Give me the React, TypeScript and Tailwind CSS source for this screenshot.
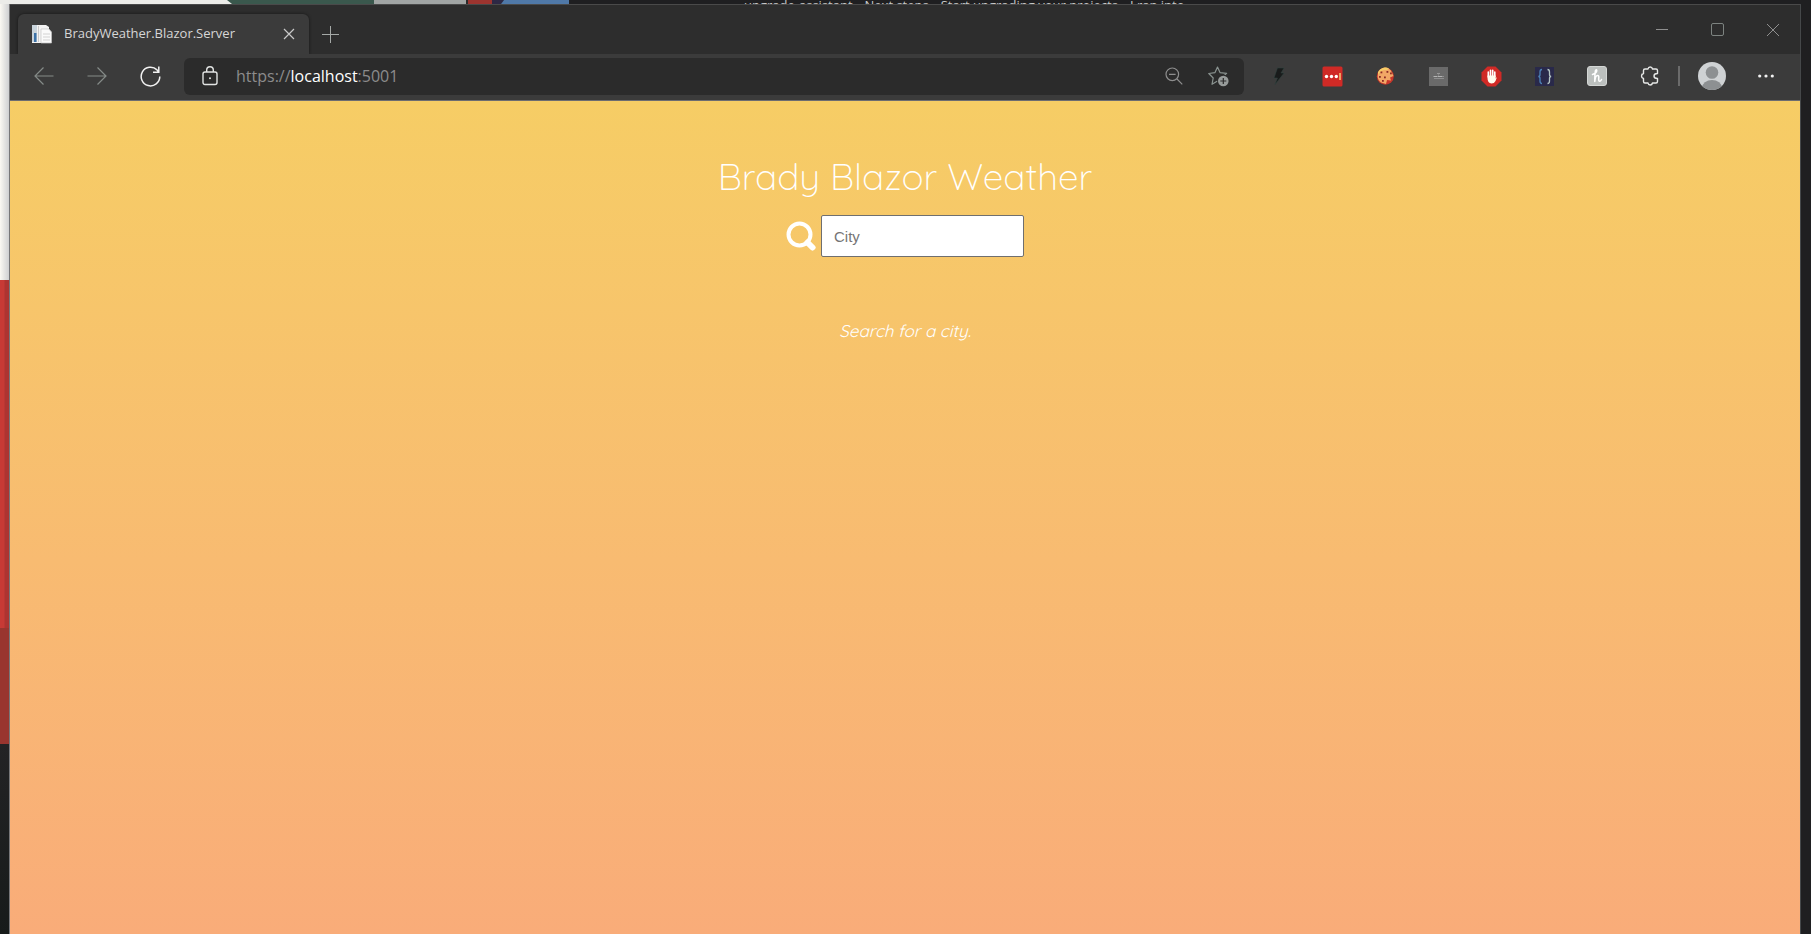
import { useState } from 'react';
import type { ReactNode } from 'react';

function IconButton({ label, className, children }: { label: string; className: string; children: ReactNode }) {
  return (
    <button type="button" aria-label={label} className={`flex shrink-0 items-center justify-center ${className}`}>
      {children}
    </button>
  );
}

function DesktopStrip() {
  return (
    <div className="flex h-1 shrink-0 overflow-hidden bg-[#1f1f21]">
      <svg className="h-1 w-[570px] shrink-0" viewBox="0 0 570 4" aria-hidden="true">
        <rect width="235" height="4" fill="#ecece9" />
        <path d="M227 0H374V4H232Z" fill="#3a584d" />
        <rect x="374" width="92" height="4" fill="#a1a5a4" />
        <rect x="466" width="2" height="4" fill="#2b2b2b" />
        <rect x="468" width="24" height="4" fill="#9c342f" />
        <path d="M492 0H504L501 4H492Z" fill="#2d2844" />
        <path d="M504 0H569V4H501Z" fill="#4f78a7" />
      </svg>
      <p className="ml-[174px] flex items-start gap-3 whitespace-pre text-[13px] leading-[10px] text-[#c8c8c8]">
        <span>upgrade-assistant</span>
        <span>Next steps</span>
        <span>Start upgrading your projects</span>
        <span>I ran into</span>
      </p>
    </div>
  );
}

function DesktopEdge() {
  return (
    <div className="flex w-[10px] shrink-0 flex-col border-r border-[#777779]" aria-hidden="true">
      <div className="h-[276px] bg-linear-to-r from-[#fbf9f3] to-[#cfd0d2]" />
      <div className="h-[348px] bg-linear-to-r from-[#c73a35] from-40% to-[#ad3431] to-60%" />
      <div className="h-[116px] bg-[#99352f]" />
      <div className="flex-1 bg-linear-to-b from-[#232325] to-[#171b1a]" />
    </div>
  );
}

function TabStrip() {
  return (
    <header className="flex h-[50px] items-end border-t border-[#4a4a4a] bg-[#2d2d2d]">
      <div className="ml-2 flex h-10 w-[291px] items-center rounded-t-md bg-[#3b3b3b] pr-2 pl-[14px] shadow-[0_0_3px_#151515]">
        <svg className="size-5 shrink-0" viewBox="0 0 20 20" aria-hidden="true">
          <path d="M0 1H14L17 3V19H0Z" fill="#f3f3f3" />
          <path d="M0 1H5V18H0Z" fill="#c9d4dc" />
          <path d="M2 9H4.500V18H2Z" fill="#3c72a8" />
          <path d="M6.500 2V18" stroke="#c9c9c9" />
          <path d="M9 5H17L19.500 8V19H9Z" fill="#fafafa" stroke="#c4c4c4" strokeWidth=".7" />
          <path d="M11 10H18M11 13H18M11 16H18" stroke="#d2d2d2" />
        </svg>
        <span className="ml-3 flex-1 whitespace-nowrap text-[13px] text-[#d6d6d6]">BradyWeather.Blazor.Server</span>
        <IconButton label="Close tab" className="size-6">
          <svg className="size-3" viewBox="0 0 12 12" stroke="#c9c9c9" strokeWidth="1.200" aria-hidden="true">
            <path d="M1 1L11 11M11 1L1 11" />
          </svg>
        </IconButton>
      </div>
      <IconButton label="New tab" className="h-10 w-[42px]">
        <svg className="size-[17px]" viewBox="0 0 17 17" stroke="#a5a9a7" aria-hidden="true">
          <path d="M8.500 0V17M0 8.500H17" />
        </svg>
      </IconButton>
      <div className="ml-auto flex h-full items-center text-[#8f8f8f]">
        <IconButton label="Minimize" className="h-full w-[55px]">
          <svg className="h-[13px] w-3" viewBox="0 0 12 13" stroke="currentColor" aria-hidden="true">
            <path d="M0 6.500H12" />
          </svg>
        </IconButton>
        <IconButton label="Maximize" className="h-full w-14">
          <svg className="size-[13px]" viewBox="0 0 13 13" stroke="#7d8380" fill="none" aria-hidden="true">
            <rect x=".5" y=".5" width="12" height="12" rx="1.500" />
          </svg>
        </IconButton>
        <IconButton label="Close window" className="h-full w-[55px]">
          <svg className="size-3" viewBox="0 0 12 12" stroke="currentColor" aria-hidden="true">
            <path d="M0 0L12 12M12 0L0 12" />
          </svg>
        </IconButton>
      </div>
    </header>
  );
}

function AddressBar() {
  return (
    <div className="flex h-[37px] min-w-0 flex-1 items-center rounded-md bg-[#2b2b2b] pr-1 pl-2">
      <IconButton label="View site information" className="size-9">
        <svg className="h-5 w-4" viewBox="0 0 16 20" fill="none" stroke="#e2e4e3" strokeWidth="1.400" aria-hidden="true">
          <rect x="1" y="6" width="14" height="12.500" rx="2" />
          <path d="M4.700 6V4A3.300 3.300 0 0 1 11.300 4V6" />
          <circle cx="8" cy="12.300" r="1" fill="#e2e4e3" stroke="none" />
        </svg>
      </IconButton>
      <p className="ml-2 flex-1 whitespace-nowrap text-base text-[#8c8c8c]">
        https://<span className="text-white">localhost</span>:5001
      </p>
      <IconButton label="Zoom out" className="size-11">
        <svg className="size-[18px]" viewBox="0 0 18 18" fill="none" stroke="#8e8e8e" strokeWidth="1.200" aria-hidden="true">
          <circle cx="7.300" cy="7.300" r="6.300" />
          <path d="M12 12L17.300 17.300M4 7.300H10.600" />
        </svg>
      </IconButton>
      <IconButton label="Add this page to favorites" className="size-11">
        <svg className="size-[21px]" viewBox="0 0 21 21" fill="none" stroke="#8a9390" strokeWidth="1.200" aria-hidden="true">
          <path d="M9.500 1L12 6.600L18.600 7.400L13.800 11.600L15 18L9.500 15L4 18.300L5.200 12L.8 7.500L7 6.600Z" strokeLinejoin="round" />
          <circle cx="15.300" cy="15" r="6.200" fill="#2b2b2b" stroke="none" />
          <circle cx="15.300" cy="15" r="5.300" fill="#979b9a" stroke="none" />
          <path d="M15.300 12V18M12.300 15H18.300" stroke="#2b2b2b" />
        </svg>
      </IconButton>
    </div>
  );
}

function Extensions() {
  return (
    <div className="flex items-center gap-[29px] pl-[23px]">
      <IconButton label="Lightning" className="size-6">
        <svg className="size-[18px]" viewBox="0 0 18 18" aria-hidden="true">
          <path d="M7.500 1H14L11 6H14L5 17.500L7.500 11H4Z" fill="#191b1b" stroke="#2f4541" strokeWidth=".5" />
        </svg>
      </IconButton>
      <IconButton label="Password manager" className="size-6">
        <svg className="size-[21px]" viewBox="0 0 21 21" aria-hidden="true">
          <rect x=".5" y=".5" width="20" height="20" rx="1.500" fill="#d02a26" />
          <circle cx="4.500" cy="10.500" r="1.700" fill="#fff" />
          <circle cx="9.500" cy="10.500" r="1.700" fill="#fff" />
          <circle cx="14.300" cy="10.500" r="1.700" fill="#fff" />
          <path d="M18 7V14" stroke="#f0ae6a" strokeWidth="1.800" />
        </svg>
      </IconButton>
      <IconButton label="Cookies" className="size-6">
        <svg className="size-[18px]" viewBox="0 0 18 18" aria-hidden="true">
          <circle cx="9.300" cy="9.300" r="8.500" fill="#c8362b" />
          <path d="M8.500 .5A8 8 0 0 1 16 6L17.500 9L14 10.500L15 13.500L11 13L10 17L5 15.500A8.500 8.500 0 0 1 8.500 .5Z" fill="#f2a766" />
          <path d="M2 5A8 8 0 0 1 13 1.500L11 3A9 9 0 0 0 2 8Z" fill="#f6cc67" />
          <g fill="#8d2b25">
            <rect x="4.500" y="4.500" width="1.800" height="1.800" />
            <rect x="10.500" y="4" width="1.800" height="1.800" />
            <rect x="8" y="9.500" width="1.800" height="1.800" />
            <rect x="3" y="9" width="1.800" height="1.800" />
            <rect x="14" y="5.500" width="1.800" height="1.800" />
            <rect x="6" y="13" width="1.800" height="1.800" />
          </g>
        </svg>
      </IconButton>
      <IconButton label="Page tools" className="size-6">
        <svg className="size-[19px]" viewBox="0 0 19 19" aria-hidden="true">
          <rect width="19" height="19" fill="#6a6a6a" />
          <path d="M8 6.500H11M9.500 7.500V8.500" stroke="#969696" />
          <path d="M4.500 9.500H14.500" stroke="#b4b4b4" strokeDasharray="4 .5" />
          <path d="M5 11.500H15" stroke="#8e8e8e" />
        </svg>
      </IconButton>
      <IconButton label="Content blocker" className="size-6">
        <svg className="size-[21px]" viewBox="0 0 21 21" aria-hidden="true">
          <path d="M6.500 .5H14.500L20.500 6.500V14.500L14.500 20.500H6.500L.5 14.500V6.500Z" fill="#d02a26" />
          <path d="M7.300 6V11M9.500 4.300V10M11.700 4.300V10M13.800 6V11" stroke="#fff" strokeWidth="1.600" strokeLinecap="round" />
          <path d="M6.500 9.500H14.600V12.500L16 11L14.500 15Q13.300 17.500 10.500 17.500Q6.500 17 6.500 12Z" fill="#fffdf0" />
        </svg>
      </IconButton>
      <IconButton label="JSON viewer" className="size-6">
        <svg className="size-[19px]" viewBox="0 0 19 19" fill="none" aria-hidden="true">
          <rect width="19" height="19" fill="#29294a" />
          <path d="M7 2.500Q5 2.500 5 5V7.500Q5 9.500 3.300 9.500Q5 9.500 5 11.500V14Q5 16.500 7 16.500" stroke="#4d83b8" strokeWidth="1.300" />
          <path d="M12.500 2.500Q14.500 2.500 14.500 5V7.500Q14.500 9.500 16.200 9.500Q14.500 9.500 14.500 11.500V14Q14.500 16.500 12.500 16.500" stroke="#b4c5c4" strokeWidth="1.300" />
        </svg>
      </IconButton>
      <IconButton label="Coupons" className="size-6">
        <svg className="size-5" viewBox="0 0 20 20" fill="none" aria-hidden="true">
          <rect x=".5" y=".5" width="19" height="19" rx="2.500" fill="#bcc0be" stroke="#d3d6d4" />
          <path
            d="M5.500 8.500Q9.800 7 9.800 4.500Q9.600 3 8.500 4.500Q7.800 7 7.800 15.500Q8.300 9.500 10.600 9.500Q12.200 9.500 11.700 12.500Q11.500 15.500 12.800 15.300Q13.800 15 14.500 13.500"
            stroke="#fff"
            strokeWidth="1.500"
            strokeLinecap="round"
            strokeLinejoin="round"
          />
        </svg>
      </IconButton>
      <IconButton label="Extensions" className="size-6">
        <svg className="size-5" viewBox="0 0 20 20" fill="none" stroke="#e7e9e8" strokeWidth="1.400" strokeLinejoin="round" aria-hidden="true">
          <path d="M5 3H8Q8.300 1 10.200 1T12.500 3H16Q17.500 3 17.500 4.500V7.500Q14 7.500 14 10T17.500 12.500V15.500Q17.500 17 16 17H12.500Q12.100 19 10.200 19T8 17H5Q3.500 17 3.500 15.500V12.500Q1.500 12 1.500 10T3.500 7.500V4.500Q3.500 3 5 3Z" />
        </svg>
      </IconButton>
    </div>
  );
}

function Toolbar() {
  return (
    <nav aria-label="Browser toolbar" className="flex h-[47px] items-center border-b border-[#6c6c70] bg-[#3b3b3b] pr-4 pb-0.5 pl-[7px]">
      <IconButton label="Back" className="w-[53px] text-[#858b88]">
        <svg className="size-5" viewBox="0 0 20 20" fill="none" stroke="currentColor" strokeWidth="1.200" aria-hidden="true">
          <path d="M19.500 10H1M9.500 1.500L1 10L9.500 18.500" />
        </svg>
      </IconButton>
      <IconButton label="Forward" className="w-[53px] text-[#858b88]">
        <svg className="size-5" viewBox="0 0 20 20" fill="none" stroke="currentColor" strokeWidth="1.200" aria-hidden="true">
          <path d="M.5 10H19M10.500 1.500L19 10L10.500 18.500" />
        </svg>
      </IconButton>
      <IconButton label="Refresh" className="mr-[7px] w-[54px]">
        <svg className="size-[21px]" viewBox="0 0 21 21" fill="none" stroke="#f1f1f1" strokeWidth="1.500" aria-hidden="true">
          <path d="M19.800 10.500A9.300 9.300 0 1 1 17 3.900L18.300 5.500M18.800 .5V6.300H13" />
        </svg>
      </IconButton>
      <AddressBar />
      <Extensions />
      <div className="ml-4 h-5 w-0.5 bg-[#6b6b6b]" />
      <IconButton label="Profile" className="ml-4 size-8">
        <svg className="size-7" viewBox="0 0 28 28" aria-hidden="true">
          <clipPath id="avatar">
            <circle cx="14" cy="14" r="14" />
          </clipPath>
          <g clipPath="url(#avatar)">
            <rect width="28" height="28" fill="#cfd2d4" />
            <circle cx="14" cy="10.500" r="6.300" fill="#8d9092" />
            <ellipse cx="14" cy="26" rx="10" ry="8" fill="#8d9092" />
          </g>
        </svg>
      </IconButton>
      <IconButton label="Settings and more" className="ml-5 size-9">
        <svg className="h-1 w-4" viewBox="0 0 16 4" fill="#f1f1f1" aria-hidden="true">
          <circle cx="1.700" cy="2" r="1.600" />
          <circle cx="8" cy="2" r="1.600" />
          <circle cx="14.300" cy="2" r="1.600" />
        </svg>
      </IconButton>
    </nav>
  );
}

function WeatherPage() {
  const [city, setCity] = useState('');
  return (
    <main className="flex flex-1 flex-col items-center bg-linear-to-b from-[#f6cd65] to-[#f9ac79] pt-[50px] font-[Quicksand,Lato,sans-serif] text-white">
      <h1 className="text-[37px] leading-[50px] font-light">Brady Blazor Weather</h1>
      <form className="mt-[14px] flex items-center gap-[5px]" onSubmit={(event) => event.preventDefault()}>
        <label htmlFor="city" aria-label="City">
          <svg className="size-[30px]" viewBox="0 0 30 30" fill="none" stroke="#fff" aria-hidden="true">
            <circle cx="13.500" cy="13.500" r="11" strokeWidth="4" />
            <path d="M21.500 21.500L26.500 26.500" strokeWidth="6" strokeLinecap="round" />
          </svg>
        </label>
        <input
          id="city"
          type="text"
          placeholder="City"
          value={city}
          onChange={(event) => setCity(event.target.value)}
          className="h-[42px] w-[203px] rounded-xs border border-[#6f6f6f] bg-white px-3 font-['Liberation_Sans',sans-serif] text-[15px] text-black placeholder:text-[#757575]"
        />
      </form>
      <p className="mt-[60px] text-[17px] leading-7 italic">Search for a city.</p>
    </main>
  );
}

export default function App() {
  return (
    <div className="flex min-h-screen flex-col bg-[#1f1f21] font-['Open_Sans',sans-serif]">
      <DesktopStrip />
      <div className="flex flex-1">
        <DesktopEdge />
        <div className="flex min-w-0 flex-1 flex-col">
          <TabStrip />
          <Toolbar />
          <WeatherPage />
        </div>
        <div className="w-[11px] shrink-0 border-l border-[#45484a]" />
      </div>
    </div>
  );
}
